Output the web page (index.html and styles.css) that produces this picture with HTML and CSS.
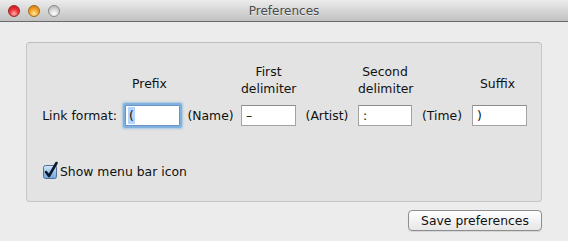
FILE: index.html
```html
<!DOCTYPE html>
<html lang="en">
<head>
    <meta charset="UTF-8">
    <meta name="viewport" content="width=device-width, initial-scale=1.0">
    <title>Preferences</title>
    <link rel="stylesheet" href="styles.css">
</head>
<body>
    <div class="window">
        <div class="titlebar">
            <div class="lights">
                <span class="light close"></span>
                <span class="light minimize"></span>
                <span class="light zoom"></span>
            </div>
            <div class="title">Preferences</div>
        </div>

        <div class="content">
            <div class="panel">
                <div class="format-grid">
                    <div class="heading col-prefix single">Prefix</div>
                    <div class="heading col-first">First<br>delimiter</div>
                    <div class="heading col-second">Second<br>delimiter</div>
                    <div class="heading col-suffix single">Suffix</div>

                    <label class="row-label" for="prefix">Link format:</label>
                    <div class="field focused"><input id="prefix" class="text-input" type="text" value="("><span class="caret-sel">(</span></div>
                    <span class="token">(Name)</span>
                    <div class="field"><input class="text-input" type="text" value="–"></div>
                    <span class="token">(Artist)</span>
                    <div class="field"><input class="text-input" type="text" value=":"></div>
                    <span class="token">(Time)</span>
                    <div class="field"><input class="text-input" type="text" value=")"></div>
                </div>

                <label class="check">
                    <span class="checkbox">
                        <svg width="18" height="20" viewBox="0 0 18 20">
                            <defs>
                                <linearGradient id="boxfill" x1="0" y1="0" x2="0" y2="1">
                                    <stop offset="0" stop-color="#d6e8fa"/>
                                    <stop offset="0.5" stop-color="#9cc4ec"/>
                                    <stop offset="1" stop-color="#6fa7df"/>
                                </linearGradient>
                            </defs>
                            <rect x="0.5" y="4.5" width="13" height="13" rx="2" fill="url(#boxfill)" stroke="#4f6f99"/>
                            <path d="M3 11 L6 15 L13.5 2" fill="none" stroke="#0f1a2b" stroke-width="2.6" stroke-linecap="round" stroke-linejoin="round"/>
                        </svg>
                    </span>
                    Show menu bar icon
                </label>
            </div>

            <div class="actions">
                <button class="push-button">Save preferences</button>
            </div>
        </div>
    </div>
</body>
</html>
```

FILE: styles.css
```css
body {
    margin: 0;
    padding: 0;
    background-color: #ececec;
    color: #111;
    font-family: "DejaVu Sans", "Liberation Sans", sans-serif;
    font-size: 12.4px;
    overflow: hidden;
}

.window {
    width: 568px;
    height: 241px;
    background-color: #ececec;
}

/* title bar */
.titlebar {
    height: 21px;
    display: grid;
    grid-template-columns: 1fr auto 1fr;
    align-items: center;
    background: linear-gradient(#ececec, #d6d6d6 50%, #c2c2c2);
    border-bottom: 1px solid #6a6a6a;
}

.lights {
    display: flex;
    gap: 8px;
    padding-left: 8px;
    padding-top: 1px;
}

.light {
    width: 12px;
    height: 12px;
    border-radius: 50%;
    box-sizing: border-box;
}

.light.close {
    background: radial-gradient(circle at 50% 75%, #ffb3b3 0%, #f0343c 45%, #b8101a 100%);
    border: 1px solid #9a2a2a;
}

.light.minimize {
    background: radial-gradient(circle at 50% 75%, #ffe7a6 0%, #f7a62a 45%, #c2700c 100%);
    border: 1px solid #a06a1e;
}

.light.zoom {
    background: radial-gradient(circle at 50% 75%, #ffffff 0%, #d6d6d6 50%, #a8a8a8 100%);
    border: 1px solid #8a8a8a;
}

.title {
    font-size: 12px;
    color: #4a4a4a;
    text-shadow: 0 1px 0 rgba(255, 255, 255, 0.5);
}

/* body */
.content {
    padding: 20px 26px 0 26px;
}

.panel {
    background-color: #e3e3e3;
    border: 1px solid #c6c6c6;
    border-top-color: #bdbdbd;
    border-radius: 4px;
    padding: 20px 14px 21px 14px;
}

.format-grid {
    display: grid;
    grid-template-columns: 84px 55px 61px 55px 62px 54px 60px 55px;
    row-gap: 8px;
    align-items: end;
    line-height: 17px;
}

.heading {
    text-align: center;
    grid-row: 1;
}

.heading.single {
    padding-bottom: 5px;
}

.col-prefix { grid-column: 2; margin-left: -6px; }
.col-first { grid-column: 4; }
.col-second { grid-column: 6; }
.col-suffix { grid-column: 8; margin-left: -4px; }

.row-label,
.token,
.field {
    grid-row: 2;
    align-self: center;
}

.row-label {
    text-align: right;
    padding-right: 8px;
}

.token {
    text-align: center;
}

.field {
    position: relative;
    height: 21px;
}

.text-input {
    width: 100%;
    height: 21px;
    box-sizing: border-box;
    margin: 0;
    padding: 0 4px;
    border: 1px solid #a3a3a3;
    border-top-color: #8c8c8c;
    background: #fff;
    font-family: inherit;
    font-size: 12.4px;
    color: #111;
    outline: none;
}

.field.focused .text-input {
    box-shadow: 0 0 0 2px #7fb1de, 0 0 2px 3px rgba(127, 177, 222, 0.6);
    border-color: #6a94c4;
    border-radius: 1px;
}

.caret-sel {
    position: absolute;
    left: 3px;
    top: 2px;
    height: 17px;
    line-height: 17px;
    padding: 0 1px;
    background-color: #b4d4fb;
    pointer-events: none;
}

/* checkbox */
.check {
    display: flex;
    align-items: center;
    gap: 3px;
    margin-top: 37px;
    padding-left: 2px;
    line-height: 17px;
}

.checkbox {
    display: block;
    width: 14px;
    height: 14px;
    position: relative;
}

.checkbox svg {
    position: absolute;
    left: 0;
    top: -4px;
}

/* button row */
.actions {
    display: flex;
    justify-content: flex-end;
    margin-top: 8px;
}

.push-button {
    width: 134px;
    height: 21px;
    padding: 0;
    border: 1px solid #8e8e8e;
    border-radius: 4px;
    background: linear-gradient(#ffffff, #f3f3f3 50%, #e6e6e6);
    font-family: inherit;
    font-size: 12.4px;
    color: #111;
    box-shadow: 0 1px 1px rgba(0, 0, 0, 0.1);
}
```
